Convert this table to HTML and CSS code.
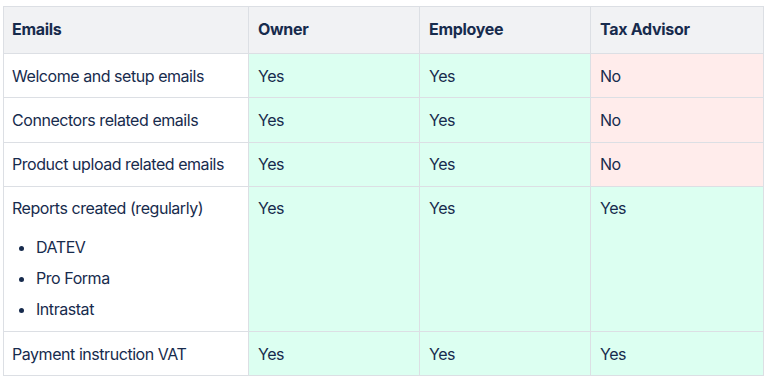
FILE: index.html
```html
<!DOCTYPE html>
<html>
<head>
<meta charset="utf-8">
<link rel="stylesheet" href="styles.css">
</head>
<body>
<div class="wrap">
<table class="matrix">
  <colgroup>
    <col class="c1"><col class="c2"><col class="c3"><col class="c4">
  </colgroup>
  <thead>
    <tr><th>Emails</th><th>Owner</th><th>Employee</th><th>Tax Advisor</th></tr>
  </thead>
  <tbody>
    <tr><td>Welcome and setup emails</td><td class="yes">Yes</td><td class="yes">Yes</td><td class="no">No</td></tr>
    <tr><td>Connectors related emails</td><td class="yes">Yes</td><td class="yes">Yes</td><td class="no">No</td></tr>
    <tr><td>Product upload related emails</td><td class="yes">Yes</td><td class="yes">Yes</td><td class="no">No</td></tr>
    <tr>
      <td>
        <p class="para">Reports created (regularly)</p>
        <ul class="list">
          <li>DATEV</li>
          <li>Pro Forma</li>
          <li>Intrastat</li>
        </ul>
      </td>
      <td class="yes">Yes</td><td class="yes">Yes</td><td class="yes">Yes</td>
    </tr>
    <tr><td>Payment instruction VAT</td><td class="yes">Yes</td><td class="yes">Yes</td><td class="yes">Yes</td></tr>
  </tbody>
</table>
</div>
</body>
</html>
```

FILE: styles.css
```css
html, body {
  margin: 0;
  padding: 0;
  background: #ffffff;
}
.wrap {
  padding: 6px 8px 0 3px;
}
.matrix {
  border-collapse: collapse;
  table-layout: fixed;
  width: 760px;
  font-family: Inter, "Noto Sans", sans-serif;
  font-size: 16px;
  line-height: 24px;
  letter-spacing: -0.45px;
  color: #172b4d;
}
.c1 { width: 245px; }
.c2 { width: 171px; }
.c3 { width: 171px; }
.c4 { width: 173px; }
.matrix th,
.matrix td {
  border: 1px solid #dcdfe4;
  padding: 9.5px 9px 9.75px 8px;
  text-align: left;
  vertical-align: top;
}
.matrix th {
  background: #f1f2f4;
  font-weight: 700;
  letter-spacing: -0.3px;
  padding-top: 10px;
  padding-bottom: 12px;
}
.matrix td + td,
.matrix th + th {
  padding-left: 9px;
}
.yes { background: #dcfff1; }
.no { background: #ffeceb; }
.para {
  margin: 0;
}
.list {
  margin: 15px 0 0 0;
  padding-left: 24px;
}
.list li {
  margin-top: 7px;
}
```
